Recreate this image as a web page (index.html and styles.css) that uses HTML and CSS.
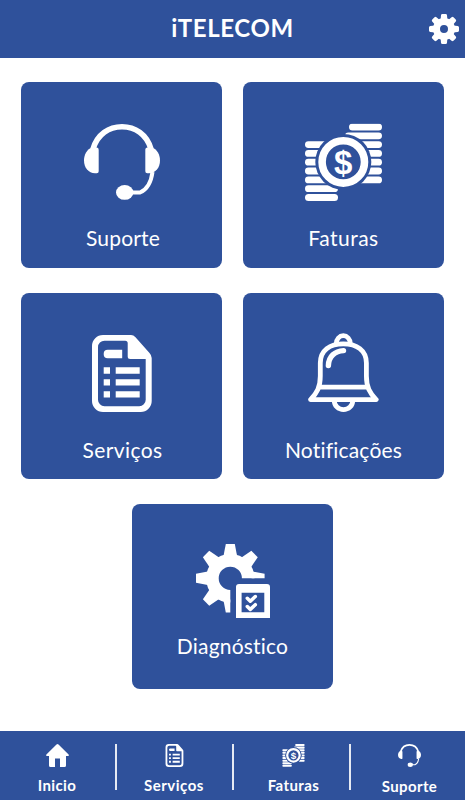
FILE: index.html
```html
<!DOCTYPE html>
<html lang="pt-BR">
<head>
    <meta charset="UTF-8">
    <meta name="viewport" content="width=device-width, initial-scale=1">
    <title>iTELECOM</title>
    <link rel="stylesheet" href="styles.css">
</head>
<body>
    <!-- icones usados no menu e no rodape -->
    <svg class="sprite" aria-hidden="true">
        <symbol id="headset" viewBox="0 0 76 76">
            <g fill="none" stroke="#fff">
                <path stroke-width="5.600" d="M9 25C13.500 10 25 2.800 38 2.800S62.500 10 67 25"/>
                <path stroke-width="4" d="M68.500 48C67 59 62 66 56 68.500H46"/>
            </g>
            <path d="M7.500 23.500h5a2.200 2.200 0 0 1 2.200 2.200v21.600a2 2 0 0 1-2 2H11C4.500 49.300 0 43.500 0 36.500c0-6 3-11 7.500-13z"/>
            <path d="M68.500 23.500h-5a2.200 2.200 0 0 0-2.200 2.200v21.600a2 2 0 0 0 2 2H65C71.500 49.300 76 43.500 76 36.500c0-6-3-11-7.500-13z"/>
            <ellipse cx="40.700" cy="68.400" rx="8.700" ry="7.400"/>
        </symbol>
        <symbol id="coins" viewBox="0 0 77 78">
            <mask id="coin-gap">
                <rect width="77" height="78" fill="#fff"/>
                <circle cx="38.300" cy="38.400" r="28" fill="#000"/>
            </mask>
            <g mask="url(#coin-gap)">
                <rect x="44" y="0" width="33" height="7" rx="3.500"/>
                <rect x="40" y="8.900" width="37" height="6.800" rx="3.400"/>
                <rect x="44" y="17.700" width="33" height="6.800" rx="3.400"/>
                <rect x="44" y="26.500" width="33" height="6.800" rx="3.400"/>
                <rect x="44" y="35.300" width="33" height="6.800" rx="3.400"/>
                <rect x="44" y="44.100" width="33" height="6.800" rx="3.400"/>
                <rect x="44" y="53" width="33" height="6.800" rx="3.400"/>
                <rect x="0" y="17.700" width="33" height="6.800" rx="3.400"/>
                <rect x="0" y="26.500" width="33" height="6.800" rx="3.400"/>
                <rect x="0" y="35.300" width="33" height="6.800" rx="3.400"/>
                <rect x="0" y="44.100" width="33" height="6.800" rx="3.400"/>
                <rect x="0" y="53" width="33" height="6.800" rx="3.400"/>
                <rect x="0" y="61.800" width="33" height="6.800" rx="3.400"/>
                <rect x="0" y="70.500" width="33" height="7" rx="3.500"/>
            </g>
            <circle cx="38.300" cy="38.400" r="21.200" fill="none" stroke="#fff" stroke-width="7.600"/>
        </symbol>
        <symbol id="document" viewBox="0 0 60 77">
            <path fill-rule="evenodd" d="M11 0h28q2.500 0 4.500 2.200L57.500 18q2.200 2.400 2.200 5v43a11 11 0 0 1-11 11H11A11 11 0 0 1 0 66V11A11 11 0 0 1 11 0zM12.500 5.700a6.500 6.500 0 0 0-6.500 6.500v52.500a6.500 6.500 0 0 0 6.500 6.500h34.700a6.500 6.500 0 0 0 6.500-6.500V24H38.200a2.500 2.500 0 0 1-2.500-2.500V8.200a2.500 2.500 0 0 0-2.500-2.500z"/>
            <path d="M15.700 14.700h14.500v8.600H15.700a4 4 0 0 1-4-4v-.6a4 4 0 0 1 4-4z"/>
            <path d="M11.700 32.300H18v6.400h-6.300zM23.700 32.300h24v6.400h-24zM11.700 44.200H18v6.400h-6.300zM23.700 44.200h24v6.400h-24zM11.700 56.200H18v6.400h-6.300zM23.700 56.200h24v6.400h-24z"/>
        </symbol>
        <symbol id="bell" viewBox="0 0 71 79">
            <g fill="none" stroke="#fff" stroke-width="4.800" stroke-linecap="round" stroke-linejoin="round">
                <path d="M28.300 10.500a7 7.800 0 0 1 14 0"/>
                <path d="M2.500 66.600C9 60 12.300 54 12.300 43V30C12.300 17 22 10.800 35.300 10.800S58.400 17 58.400 30v13c0 11 3.300 17 9.800 23.600z"/>
                <path d="M12 54.200h47"/>
                <path d="M26.300 68a9.200 8.600 0 0 0 18.400 0"/>
                <path stroke-width="5.400" d="M20.400 32.500C20.700 23.500 27 18 35.500 17.600"/>
            </g>
        </symbol>
        <symbol id="diagnostic" viewBox="0 0 74 74">
            <clipPath id="gear-cut">
                <path d="M0 0h74v34.300H34.300V74H0z"/>
            </clipPath>
            <g clip-path="url(#gear-cut)">
                <circle cx="34.300" cy="34.300" r="17.900" fill="none" stroke="#fff" stroke-width="12.600"/>
                <path id="tooth" d="M27.300 13L29.800 0h9L41.300 13z"/>
                <use href="#tooth" transform="rotate(45 34.300 34.300)"/>
                <use href="#tooth" transform="rotate(90 34.300 34.300)"/>
                <use href="#tooth" transform="rotate(180 34.300 34.300)"/>
                <use href="#tooth" transform="rotate(225 34.300 34.300)"/>
                <use href="#tooth" transform="rotate(270 34.300 34.300)"/>
                <use href="#tooth" transform="rotate(315 34.300 34.300)"/>
            </g>
            <path fill-rule="evenodd" d="M43 40h28a3 3 0 0 1 3 3v31H40V43a3 3 0 0 1 3-3zM45.600 48.700v19.600h22.700V48.700z"/>
            <path fill="none" stroke="#fff" stroke-width="3.500" stroke-linecap="round" stroke-linejoin="round" d="M51.300 54.300l3 2.900 5-4.700M51.300 62.500l3 2.900 5-4.700"/>
        </symbol>
        <symbol id="settings" viewBox="0 0 30 30">
            <circle cx="15" cy="15" r="7.500" fill="none" stroke="#fff" stroke-width="7"/>
            <path id="cog" d="M11.600 6L12 1.300Q12.100 0 13.400 0h3.200q1.300 0 1.400 1.300l.4 4.700z"/>
            <use href="#cog" transform="rotate(45 15 15)"/>
            <use href="#cog" transform="rotate(90 15 15)"/>
            <use href="#cog" transform="rotate(135 15 15)"/>
            <use href="#cog" transform="rotate(180 15 15)"/>
            <use href="#cog" transform="rotate(225 15 15)"/>
            <use href="#cog" transform="rotate(270 15 15)"/>
            <use href="#cog" transform="rotate(315 15 15)"/>
        </symbol>
        <symbol id="home" viewBox="0 0 23 23">
            <path d="M10.500.5q1-.9 2 0L22.600 10.600q.8 1.100-.5 1.300H20v9.600q0 1.500-1.500 1.500H14v-8.500H9V23H4.500Q3 23 3 21.500v-9.600H.9q-1.300-.2-.5-1.300z"/>
        </symbol>
    </svg>

    <header class="header">
        <h1>iTELECOM</h1>
        <svg class="settings"><use href="#settings"/></svg>
    </header>

    <main class="menu">
        <a class="card">
            <svg class="icon icon-headset"><use href="#headset"/></svg>
            <span class="label suporte">Suporte</span>
        </a>
        <a class="card">
            <svg class="icon icon-coins" viewBox="0 0 77 78">
                <use href="#coins"/>
                <text class="cifra" x="38.300" y="50" text-anchor="middle">$</text>
            </svg>
            <span class="label faturas">Faturas</span>
        </a>
        <a class="card">
            <svg class="icon icon-document"><use href="#document"/></svg>
            <span class="label servicos">Serviços</span>
        </a>
        <a class="card">
            <svg class="icon icon-bell"><use href="#bell"/></svg>
            <span class="label notificacoes">Notificações</span>
        </a>
        <a class="card card-center">
            <svg class="icon icon-diagnostic"><use href="#diagnostic"/></svg>
            <span class="label">Diagnóstico</span>
        </a>
    </main>

    <nav class="footer">
        <a class="tab tab-inicio">
            <svg class="tab-icon"><use href="#home"/></svg>
            <span>Inicio</span>
        </a>
        <a class="tab tab-servicos">
            <svg class="tab-icon"><use href="#document"/></svg>
            <span>Serviços</span>
        </a>
        <a class="tab tab-faturas">
            <svg class="tab-icon" viewBox="0 0 77 78">
                <use href="#coins"/>
                <text class="cifra" x="38.300" y="50" text-anchor="middle">$</text>
            </svg>
            <span>Faturas</span>
        </a>
        <a class="tab tab-suporte">
            <svg class="tab-icon"><use href="#headset"/></svg>
            <span>Suporte</span>
        </a>
    </nav>
</body>
</html>
```

FILE: styles.css
```css
* {
    box-sizing: border-box;
}

body {
    margin: 0;
    height: 800px;
    display: flex;
    flex-direction: column;
    background-color: #fff;
    color: #fff;
    font-family: Lato, "Open Sans", sans-serif;
}

.sprite {
    position: absolute;
    width: 0;
    height: 0;
}

svg {
    display: block;
    fill: #fff;
}

.cifra {
    font-family: "Liberation Sans", Arial, sans-serif;
    font-size: 33px;
    font-weight: bold;
}

/* topo */
.header {
    display: grid;
    grid-template-columns: 36px 1fr 36px;
    align-items: center;
    height: 58px;
    background-color: #2f519b;
}

.header h1 {
    grid-column: 2;
    margin: 0;
    padding-bottom: 2px;
    font-size: 24px;
    font-weight: bold;
    line-height: 30px;
    letter-spacing: 0.6px;
    text-align: center;
}

.settings {
    width: 30px;
    height: 30px;
    margin-bottom: 1px;
}

/* menu */
.menu {
    flex: 1;
    display: grid;
    grid-template-columns: 201px 201px;
    grid-template-rows: 185.500px 186px 185.500px;
    column-gap: 21px;
    row-gap: 25.200px;
    justify-content: center;
    padding-top: 24px;
}

.card {
    display: flex;
    flex-direction: column;
    align-items: center;
    padding-top: 41px;
    background-color: #2f519b;
    border-radius: 8px;
}

.card-center {
    grid-column: 1 / 3;
    justify-self: center;
    width: 201px;
    padding-top: 40px;
}

.icon {
    height: 79px;
    width: 79px;
}

.icon-headset {
    width: 76px;
    padding: 1px 0 2px;
}

.icon-coins {
    width: 77px;
}

.icon-document {
    width: 60px;
}

.icon-bell {
    width: 71px;
    margin-top: -1px;
    margin-bottom: 1px;
}

.icon-diagnostic {
    width: 74px;
    height: 74px;
}

.label {
    margin-top: 23px;
    font-size: 21px;
    line-height: 26px;
    letter-spacing: 0.2px;
}

.suporte {
    padding-left: 3px;
}

.faturas {
    letter-spacing: 0.5px;
}

.servicos {
    margin-top: 24px;
    padding-left: 2px;
    letter-spacing: 0.4px;
}

.notificacoes {
    margin-top: 24px;
}

.card-center .label {
    margin-top: 15px;
}

/* rodape */
.footer {
    display: grid;
    grid-template-columns: 116px 117px 117px 115px;
    height: 69px;
    background-color: #2f519b;
}

.tab {
    position: relative;
    display: flex;
    flex-direction: column;
    align-items: center;
    padding-top: 13px;
    font-size: 15px;
    font-weight: bold;
    line-height: 18px;
    letter-spacing: 0.35px;
}

.tab + .tab::before {
    content: "";
    position: absolute;
    left: -1px;
    top: 12.500px;
    width: 2px;
    height: 46px;
    background-color: #e6eaf3;
}

.tab-icon {
    width: 23px;
    height: 23px;
    margin-bottom: 9px;
}

.tab-inicio {
    padding-right: 2px;
}

.tab-servicos {
    padding-right: 1px;
    letter-spacing: 0.5px;
}

.tab-faturas {
    padding-left: 4px;
    letter-spacing: 0.4px;
}

.tab-suporte {
    padding-left: 4px;
}

.tab-suporte .tab-icon {
    margin-bottom: 10px;
}
```
